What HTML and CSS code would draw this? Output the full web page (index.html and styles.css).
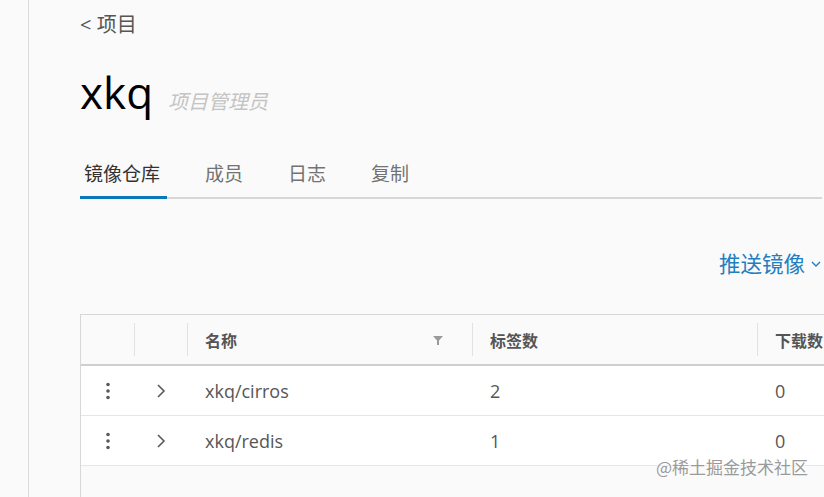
FILE: index.html
```html
<!DOCTYPE html>
<html lang="zh">
  <head>
    <meta charset="utf-8" />
    <title>xkq - 镜像仓库</title>
    <link rel="stylesheet" href="styles.css">
  </head>
  <body>
    <div class="sidebar"></div>
    <main class="content">
      <a class="crumb" href="#">&lt; 项目</a>
      <div class="title">
        <h1>xkq</h1>
        <span class="role">项目管理员</span>
      </div>
      <nav class="tabs">
        <a class="tab active" href="#">镜像仓库</a>
        <a class="tab" href="#">成员</a>
        <a class="tab" href="#">日志</a>
        <a class="tab" href="#">复制</a>
      </nav>
      <div class="toolbar">
        <button class="push">推送镜像
          <svg width="12" height="12" viewBox="0 0 12 12"><path d="M2 4 6 8 10 4" fill="none" stroke="currentColor" stroke-width="1.4"/></svg>
        </button>
      </div>
      <div class="grid">
        <div class="row head">
          <div class="cell"></div>
          <div class="cell sep"></div>
          <div class="cell sep name">名称
            <svg class="filter" width="12" height="12" viewBox="0 0 12 12"><path d="M1 2h10L7 6.5V11H5V6.5z" fill="#9a9a9a"/></svg>
          </div>
          <div class="cell sep">标签数</div>
          <div class="cell sep">下载数</div>
        </div>
        <div class="row">
          <div class="cell icon">
            <svg width="4" height="18" viewBox="0 0 4 18"><circle cx="2" cy="2.5" r="1.8"/><circle cx="2" cy="9" r="1.8"/><circle cx="2" cy="15.5" r="1.8"/></svg>
          </div>
          <div class="cell icon">
            <svg width="10" height="16" viewBox="0 0 10 16"><path d="M2 2l6 6-6 6" fill="none" stroke="currentColor" stroke-width="1.6"/></svg>
          </div>
          <div class="cell">xkq/cirros</div>
          <div class="cell">2</div>
          <div class="cell">0</div>
        </div>
        <div class="row">
          <div class="cell icon">
            <svg width="4" height="18" viewBox="0 0 4 18"><circle cx="2" cy="2.5" r="1.8"/><circle cx="2" cy="9" r="1.8"/><circle cx="2" cy="15.5" r="1.8"/></svg>
          </div>
          <div class="cell icon">
            <svg width="10" height="16" viewBox="0 0 10 16"><path d="M2 2l6 6-6 6" fill="none" stroke="currentColor" stroke-width="1.6"/></svg>
          </div>
          <div class="cell">xkq/redis</div>
          <div class="cell">1</div>
          <div class="cell">0</div>
        </div>
        <div class="foot"></div>
      </div>
    </main>
    <div class="watermark">@稀土掘金技术社区</div>
  </body>
</html>
```

FILE: styles.css
```css
html,
body {
  height: 100%;
  margin: 0;
  padding: 0;
}

body {
  display: flex;
  background-color: #fafafa;
  color: #565656;
  font-family: "Open Sans", "Noto Sans CJK SC", sans-serif;
  overflow: hidden;
}

.sidebar {
  flex: none;
  width: 28px;
  border-right: 1px solid #dcdcdc;
}

.content {
  flex: 1;
  min-width: 0;
  padding: 13px 2px 0 51px;
}

.crumb {
  display: block;
  font-size: 20px;
  line-height: 24px;
  color: #565656;
  text-decoration: none;
}

.title {
  display: flex;
  align-items: baseline;
  gap: 15px;
  margin-top: 31px;
}

.title h1 {
  margin: 0;
  font-size: 44px;
  font-weight: 400;
  line-height: 48px;
  color: #000;
}

.role {
  font-size: 20px;
  font-style: italic;
  color: #c4c4c4;
}

.tabs {
  display: flex;
  gap: 37px;
  margin-top: 45px;
  box-shadow: inset 0 -2px 0 #d7d7d7;
}

.tab {
  padding: 0 4px 9px;
  font-size: 19px;
  line-height: 26px;
  color: #737373;
  text-decoration: none;
  border-bottom: 3px solid transparent;
}

.tab.active {
  color: #333;
  border-bottom-color: #0a79b8;
  padding-right: 7px;
}

.tab.active + .tab {
  margin-left: -3px;
}

.toolbar {
  display: flex;
  justify-content: flex-end;
  margin-top: 51px;
}

.push {
  display: flex;
  align-items: center;
  gap: 5px;
  padding: 0;
  border: 0;
  background: none;
  font-family: inherit;
  font-size: 21.5px;
  line-height: 28px;
  color: #1f7fc0;
}

.grid {
  width: 900px;
  margin-top: 36px;
  border-top: 1px solid #d7d7d7;
  border-left: 1px solid #d7d7d7;
  font-size: 18px;
}

.row {
  display: grid;
  grid-template-columns: 53px 53px 285px 285px 1fr;
  height: 49px;
  background: #fff;
  border-bottom: 1px solid #e6e6e6;
}

.row.head {
  background: #fafafa;
  border-bottom: 2px solid #cfcfcf;
}

.cell {
  display: flex;
  align-items: center;
  padding-left: 18px;
}

.head .cell {
  font-weight: 700;
  font-size: 16px;
  color: #555;
}

.head .sep {
  position: relative;
}

.head .sep::before {
  content: "";
  position: absolute;
  left: 0;
  top: 8px;
  bottom: 8px;
  border-left: 1px solid #e2e2e2;
}

.name {
  justify-content: space-between;
  padding-right: 28px;
}

.cell.icon {
  justify-content: center;
  padding-left: 0;
  color: #595959;
  fill: #595959;
}

.foot {
  height: 40px;
  background: #fafafa;
}

.watermark {
  position: absolute;
  right: 16px;
  bottom: 18px;
  font-family: "Noto Sans CJK SC", sans-serif;
  font-size: 17px;
  color: #9a9a9a;
  text-shadow: 0 0 2px #fff, 0 0 2px #fff;
}
```
